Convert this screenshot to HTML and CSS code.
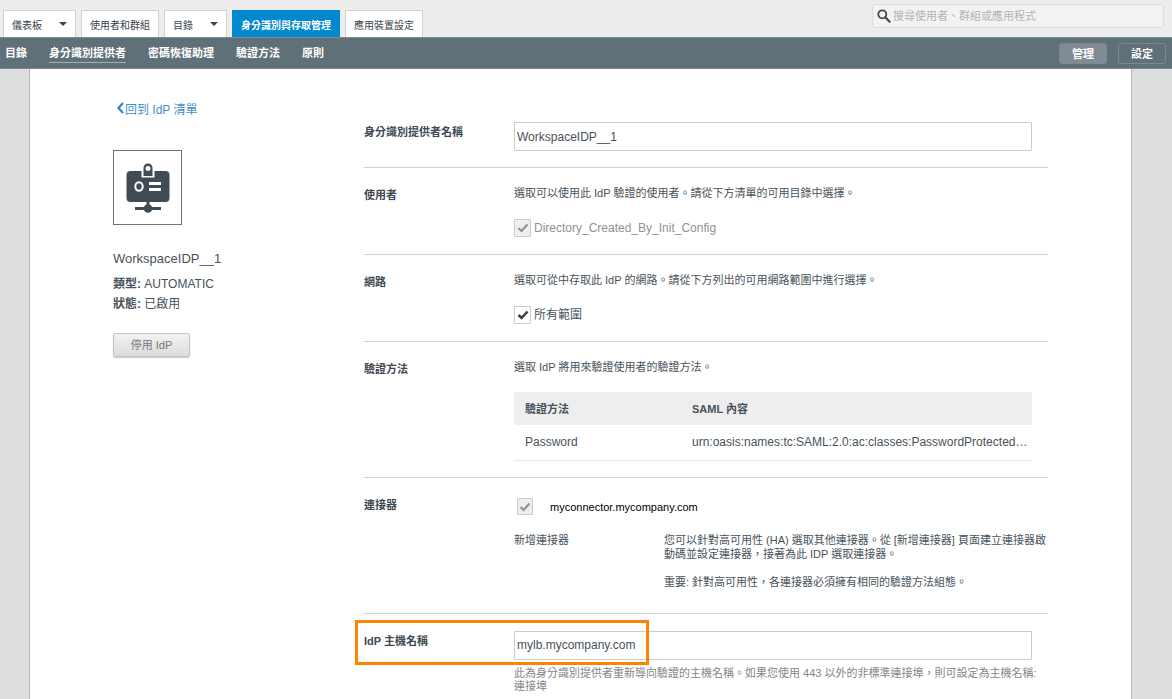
FILE: index.html
```html
<!DOCTYPE html>
<html lang="zh-Hant">
<head>
<meta charset="utf-8">
<meta name="viewport" content="width=device-width, initial-scale=1">
<title>身分識別提供者</title>
<link rel="stylesheet" href="styles.css">
</head>
<body>
<header class="topbar">
  <nav class="tabs" aria-label="主要">
    <button class="tab tab-menu" type="button">儀表板<span class="caret"></span></button>
    <button class="tab" type="button">使用者和群組</button>
    <button class="tab tab-menu" type="button">目錄<span class="caret"></span></button>
    <button class="tab tab-active" type="button">身分識別與存取管理</button>
    <button class="tab" type="button">應用裝置設定</button>
  </nav>
  <label class="search">
    <svg class="search-icon" viewBox="0 0 14 14" aria-hidden="true"><circle cx="5.3" cy="5.3" r="4" fill="none" stroke="#3f4a53" stroke-width="1.8"/><path d="M8.3 8.3L12.6 12.8" stroke="#3f4a53" stroke-width="2.2" stroke-linecap="round"/></svg>
    <input class="search-input" type="search" placeholder="搜尋使用者、群組或應用程式" aria-label="搜尋">
  </label>
</header>
<div class="subnav">
  <nav class="sublinks" aria-label="次要">
    <a class="sublink" href="#">目錄</a>
    <a class="sublink sublink-active" href="#">身分識別提供者</a>
    <a class="sublink" href="#">密碼恢復助理</a>
    <a class="sublink" href="#">驗證方法</a>
    <a class="sublink" href="#">原則</a>
  </nav>
  <div class="modes">
    <button class="mode mode-active" type="button">管理</button>
    <button class="mode" type="button">設定</button>
  </div>
</div>
<main class="page">
  <aside class="summary">
    <a class="back" href="#"><svg class="back-icon" viewBox="0 0 8 12" aria-hidden="true"><path d="M6.5 1L2 6L6.5 11" fill="none" stroke="#2d86c3" stroke-width="2.2"/></svg>回到 IdP 清單</a>
    <div class="badge">
      <svg class="badge-icon" viewBox="0 0 44 50" aria-hidden="true">
        <rect x="0.5" y="8" width="43" height="31" rx="4" fill="#414b55"/>
        <path d="M15.5 7h13v7.500h-13z" fill="#fff"/>
        <path d="M17.500 13V5a4.500 4.500 0 0 1 9 0v8z" fill="#414b55"/>
        <circle cx="22" cy="5.500" r="2.500" fill="#fff"/>
        <ellipse cx="13" cy="23.500" rx="3.700" ry="4.200" fill="none" stroke="#fff" stroke-width="2"/>
        <path d="M23 20.500h12M23 26.500h12" stroke="#fff" stroke-width="3"/>
        <path d="M22 38v8M9 45.500h26" stroke="#414b55" stroke-width="3"/>
        <circle cx="22" cy="45.500" r="4.300" fill="#414b55"/>
      </svg>
    </div>
    <h1 class="name">WorkspaceIDP__1</h1>
    <p class="fact"><b>類型:</b> AUTOMATIC</p>
    <p class="fact"><b>狀態:</b> 已啟用</p>
    <button class="disable" type="button">停用 IdP</button>
  </aside>
  <form class="form">
    <section class="row">
      <label class="label" for="idp-name">身分識別提供者名稱</label>
      <div class="field"><input class="text" id="idp-name" type="text" value="WorkspaceIDP__1"></div>
    </section>
    <section class="row">
      <h2 class="label">使用者</h2>
      <div class="field">
        <p class="desc">選取可以使用此 IdP 驗證的使用者。請從下方清單的可用目錄中選擇。</p>
        <label class="option option-disabled"><input class="check" type="checkbox" checked disabled>Directory_Created_By_Init_Config</label>
      </div>
    </section>
    <section class="row">
      <h2 class="label">網路</h2>
      <div class="field">
        <p class="desc">選取可從中存取此 IdP 的網路。請從下方列出的可用網路範圍中進行選擇。</p>
        <label class="option"><input class="check" type="checkbox" checked>所有範圍</label>
      </div>
    </section>
    <section class="row">
      <h2 class="label">驗證方法</h2>
      <div class="field">
        <p class="desc">選取 IdP 將用來驗證使用者的驗證方法。</p>
        <table class="methods">
          <thead><tr><th class="method-col">驗證方法</th><th>SAML 內容</th></tr></thead>
          <tbody><tr><td>Password</td><td>urn:oasis:names:tc:SAML:2.0:ac:classes:PasswordProtected…</td></tr></tbody>
        </table>
      </div>
    </section>
    <section class="row row-connectors">
      <h2 class="label">連接器</h2>
      <div>
        <label class="connector"><input class="check" type="checkbox" checked disabled>myconnector.mycompany.com</label>
        <div class="add">
          <p>新增連接器</p>
          <div>
            <p>您可以針對高可用性 (HA) 選取其他連接器。從 [新增連接器] 頁面建立連接器啟動碼並設定連接器，接著為此 IDP 選取連接器。</p>
            <p class="note">重要: 針對高可用性，各連接器必須擁有相同的驗證方法組態。</p>
          </div>
        </div>
      </div>
    </section>
    <section class="row row-host">
      <label class="label" for="idp-host">IdP 主機名稱</label>
      <div class="field">
        <input class="text" id="idp-host" type="text" value="mylb.mycompany.com">
        <p class="hint">此為身分識別提供者重新導向驗證的主機名稱。如果您使用 443 以外的非標準連接埠，則可設定為主機名稱:<wbr>連接埠</p>
      </div>
      <div class="highlight"></div>
    </section>
  </form>
</main>
</body>
</html>
```
FILE: styles.css
```css
* { box-sizing: border-box; }
body {
  margin: 0;
  min-height: 100vh;
  display: flex;
  flex-direction: column;
  background: #dcdddf;
  color: #48525b;
  font: 11px/14px "Liberation Sans", "Noto Sans CJK TC", sans-serif;
}
h1, h2, p { margin: 0; font-weight: 400; }
button, input { font-family: inherit; color: inherit; }
button { cursor: pointer; }

.topbar {
  display: flex;
  justify-content: space-between;
  align-items: flex-end;
  height: 37px;
  padding: 0 8px 0 3px;
  background: #ededed;
}
.tabs { display: flex; gap: 5px; }
.tab {
  height: 27px;
  padding: 0 8px;
  border: 1px solid #d2d2d2;
  border-bottom: 0;
  background: #fff;
  color: #39444d;
  font-size: 10px;
  white-space: nowrap;
}
.tab-menu { display: flex; align-items: center; gap: 17px; }
.caret {
  border: 4px solid transparent;
  border-top-color: #39444d;
  border-bottom: 0;
}
.tab-active {
  border-color: #0089d0;
  background: #0089d0;
  color: #fff;
  font-weight: 700;
}
.search {
  display: flex;
  align-items: center;
  gap: 2px;
  width: 292px;
  height: 24px;
  margin-bottom: 9px;
  padding: 0 4px;
  border: 1px solid #ddd;
  border-radius: 3px;
  background: #f3f3f3;
}
.search-icon { width: 14px; height: 14px; }
.search-input {
  flex: 1;
  min-width: 0;
  padding: 0;
  border: 0;
  outline: 0;
  background: none;
  font-size: 11px;
}
.search-input::placeholder { color: #b4b4b4; }

.subnav {
  display: flex;
  justify-content: space-between;
  align-items: center;
  height: 32px;
  padding: 0 6px 0 5px;
  border-top: 1px solid #7c8a90;
  border-bottom: 1px solid #7c8a90;
  background: #5f7078;
}
.sublinks { display: flex; gap: 22px; }
.sublink {
  padding: 3px 0 2px;
  border-bottom: 1px solid transparent;
  color: #fff;
  font-weight: 700;
  text-decoration: none;
}
.sublink-active { border-color: #a4aeb3; }
.modes { display: flex; gap: 11px; }
.mode {
  width: 48px;
  height: 21px;
  padding: 0;
  border: 1px solid #7b8990;
  border-radius: 3px;
  background: none;
  color: #fff;
  font-size: 11px;
  font-weight: 700;
}
.mode-active { background: #7f8c93; }

.page {
  flex: 1;
  display: flex;
  margin: 0 40px 0 29px;
  padding: 0 83px;
  border: 1px solid #b5b7ba;
  border-width: 0 1px;
  background: #fff;
}
.summary {
  flex: 0 0 251px;
  display: flex;
  flex-direction: column;
  align-items: flex-start;
  padding-top: 33px;
}
.back {
  display: flex;
  align-items: center;
  margin-left: 3px;
  color: #3f8fc9;
  font-size: 12px;
  line-height: 16px;
  text-decoration: none;
}
.back-icon { width: 9px; height: 12px; margin-bottom: 4px; }
.badge {
  display: grid;
  place-items: center;
  width: 69px;
  height: 75px;
  margin: 32px 0 24px;
  border: 1px solid #6b737a;
}
.badge-icon { width: 44px; height: 50px; }
.name { margin-bottom: 5px; font-size: 13px; line-height: 20px; }
.fact { font-size: 12px; line-height: 20px; }
.disable {
  width: 77px;
  height: 24px;
  margin-top: 19px;
  padding: 0 0 2px;
  border: 1px solid #c3c3c3;
  border-radius: 2px;
  background: linear-gradient(#f2f2f2, #dcdcdc);
  box-shadow: 0 1px 1px #ccc;
  color: #777;
  font-size: 11px;
}

.form { flex: 1; min-width: 0; padding-top: 36px; }
.row {
  position: relative;
  display: grid;
  grid-template-columns: 150px minmax(0, 1fr);
  padding: 17px 0 16px;
  border-bottom: 1px solid #d0d0d0;
}
.row-connectors { padding-bottom: 24px; }
.row-host { padding-bottom: 4px; border-bottom: 0; }
.label { padding-top: 3px; color: #3f4952; font-size: 11px; font-weight: 700; }
.field { padding-right: 16px; }
.text {
  display: block;
  width: 100%;
  height: 29px;
  padding: 0 2px;
  border: 1px solid #ccc;
  border-radius: 1px;
  background: #fff;
  font-size: 12px;
}
.desc { padding-top: 1px; }
.option {
  display: flex;
  align-items: center;
  gap: 3px;
  margin: 19px 0 1px;
  font-size: 12px;
  line-height: 18px;
}
.option-disabled { color: #929292; }
.check {
  appearance: none;
  flex: none;
  width: 17px;
  height: 18px;
  margin: 0;
  border: 1px solid #ccc;
  border-radius: 1px;
  background: #fff url("data:image/svg+xml,%3Csvg xmlns='http://www.w3.org/2000/svg' viewBox='0 0 12 12'%3E%3Cpath d='M1.500 6L4.500 9L10.500 2.500' fill='none' stroke='%2337424b' stroke-width='2.500'/%3E%3C/svg%3E") center / 12px no-repeat;
}
.check:disabled {
  background: #eee url("data:image/svg+xml,%3Csvg xmlns='http://www.w3.org/2000/svg' viewBox='0 0 12 12'%3E%3Cpath d='M1.500 6L4.500 9L10.500 2.500' fill='none' stroke='%23929292' stroke-width='2.200'/%3E%3C/svg%3E") center / 12px no-repeat;
}
.methods {
  width: 100%;
  margin-top: 18px;
  border-collapse: collapse;
  table-layout: fixed;
}
.methods th, .methods td {
  padding: 0 0 0 11px;
  text-align: left;
  overflow-wrap: anywhere;
}
.methods th { height: 33px; background: #eee; }
.methods td { height: 35px; border-bottom: 1px solid #e8e8e8; font-size: 12px; }
.method-col { width: 167px; }
.connector {
  display: flex;
  align-items: center;
  gap: 17px;
  height: 22px;
  margin-top: 1px;
  padding-left: 3px;
  color: #000;
}
.connector .check { width: 16px; height: 17px; }
.add {
  display: grid;
  grid-template-columns: 150px minmax(0, 1fr);
  margin-top: 15px;
}
.note { margin-top: 14px; }
.hint { margin: 7px -12px 0 0; color: #858585; line-height: 13px; }
.highlight {
  position: absolute;
  top: 6px;
  left: -9px;
  width: 294px;
  height: 45px;
  border: 3px solid #ff8200;
  pointer-events: none;
}
```
